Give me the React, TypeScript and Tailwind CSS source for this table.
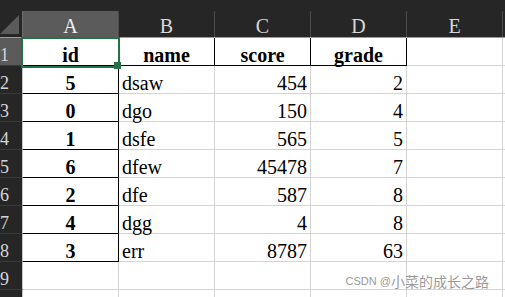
const columns = ['A', 'B', 'C', 'D', 'E']

const rows: [string, string, string, string][] = [
  ['5', 'dsaw', '454', '2'],
  ['0', 'dgo', '150', '4'],
  ['1', 'dsfe', '565', '5'],
  ['6', 'dfew', '45478', '7'],
  ['2', 'dfe', '587', '8'],
  ['4', 'dgg', '4', '8'],
  ['3', 'err', '8787', '63'],
]

const RowHeader = ({ n, active }: { n?: number; active?: boolean }) => (
  <div
    className={`flex h-[28px] w-[23px] shrink-0 items-end overflow-hidden border-r border-b border-r-[#c4c4c4] border-b-[#3a3a3a] text-[18px] leading-[20px] text-[#d6d6d6] ${
      active ? 'bg-[#5b5b5b]' : 'bg-[#262626]'
    }`}
  >
    <span>{n}</span>
  </div>
)

const Cell = ({
  children,
  black,
  align = 'left',
  bold,
}: {
  children?: React.ReactNode
  black?: boolean
  align?: 'left' | 'right' | 'center'
  bold?: boolean
}) => (
  <div
    className={`flex h-[28px] w-[96px] shrink-0 items-end border-r border-b text-[20px] leading-[20px] text-black ${
      black ? 'border-black' : 'border-[#d4d4d4]'
    } ${align === 'right' ? 'justify-end pr-[3px]' : align === 'center' ? 'justify-center' : 'justify-start pl-[3px]'} ${
      bold ? 'font-bold' : ''
    }`}
  >
    {children}
  </div>
)

export default function App() {
  return (
    <div className="relative h-[297px] w-[505px] overflow-hidden bg-white font-['Liberation_Serif',serif]">
      <div className="h-[11px] bg-[#262626]" />

      {/* column headers */}
      <div className="flex h-[27px] border-b border-[#9c9c9c] bg-[#262626]">
        <div className="relative w-[23px] shrink-0 border-r border-[#6e6e6e]">
          <svg className="absolute top-[4px] left-0" width="20" height="20" viewBox="0 0 20 20">
            <polygon points="0,19 19,19 19,0" fill="#5b5b5b" />
          </svg>
        </div>
        {columns.map((c, i) => (
          <div
            key={c}
            className={`flex w-[96px] shrink-0 items-end justify-center border-r border-[#4a4a4a] pb-[1px] text-[20px] leading-[20px] ${
              i === 0 ? 'bg-[#5b5b5b] text-[#f0f0f0]' : 'text-[#d8d8d8]'
            }`}
          >
            {c}
          </div>
        ))}
        <div className="flex-1" />
      </div>

      {/* header row */}
      <div className="flex">
        <RowHeader n={1} active />
        <Cell black align="center" bold>
          id
        </Cell>
        <Cell black align="center" bold>
          name
        </Cell>
        <Cell black align="center" bold>
          score
        </Cell>
        <Cell black align="center" bold>
          grade
        </Cell>
        <Cell />
        <div className="h-[28px] flex-1 border-b border-[#d4d4d4]" />
      </div>

      {rows.map((r, i) => (
        <div key={i} className="flex">
          <RowHeader n={i + 2} />
          <Cell black align="center" bold>
            {r[0]}
          </Cell>
          <Cell>{r[1]}</Cell>
          <Cell align="right">{r[2]}</Cell>
          <Cell align="right">{r[3]}</Cell>
          <Cell />
          <div className="h-[28px] flex-1 border-b border-[#d4d4d4]" />
        </div>
      ))}

      <div className="flex">
        <RowHeader n={9} />
        <Cell />
        <Cell />
        <Cell />
        <Cell />
        <Cell />
        <div className="h-[28px] flex-1 border-b border-[#d4d4d4]" />
      </div>

      {/* row 10, only its top edge shows */}
      <div className="flex">
        <RowHeader />
        <Cell />
        <Cell />
        <Cell />
        <Cell />
        <Cell />
      </div>

      {/* selection on A1 */}
      <div className="absolute top-[37px] left-[21px] h-[31px] w-[99px] border-2 border-[#217346]" />
      <div className="absolute top-[62px] left-[114px] h-[7px] w-[7px] bg-[#217346]" />

      <div className="absolute right-[16px] bottom-[8px] flex items-end font-['Liberation_Sans','Noto_Sans_CJK_SC',sans-serif] leading-[15px] text-[#9a9a9a]">
        <span className="text-[11px]">CSDN @</span>
        <span className="font-['Noto_Sans_CJK_SC',sans-serif] text-[14px]">小菜的成长之路</span>
      </div>
    </div>
  )
}
